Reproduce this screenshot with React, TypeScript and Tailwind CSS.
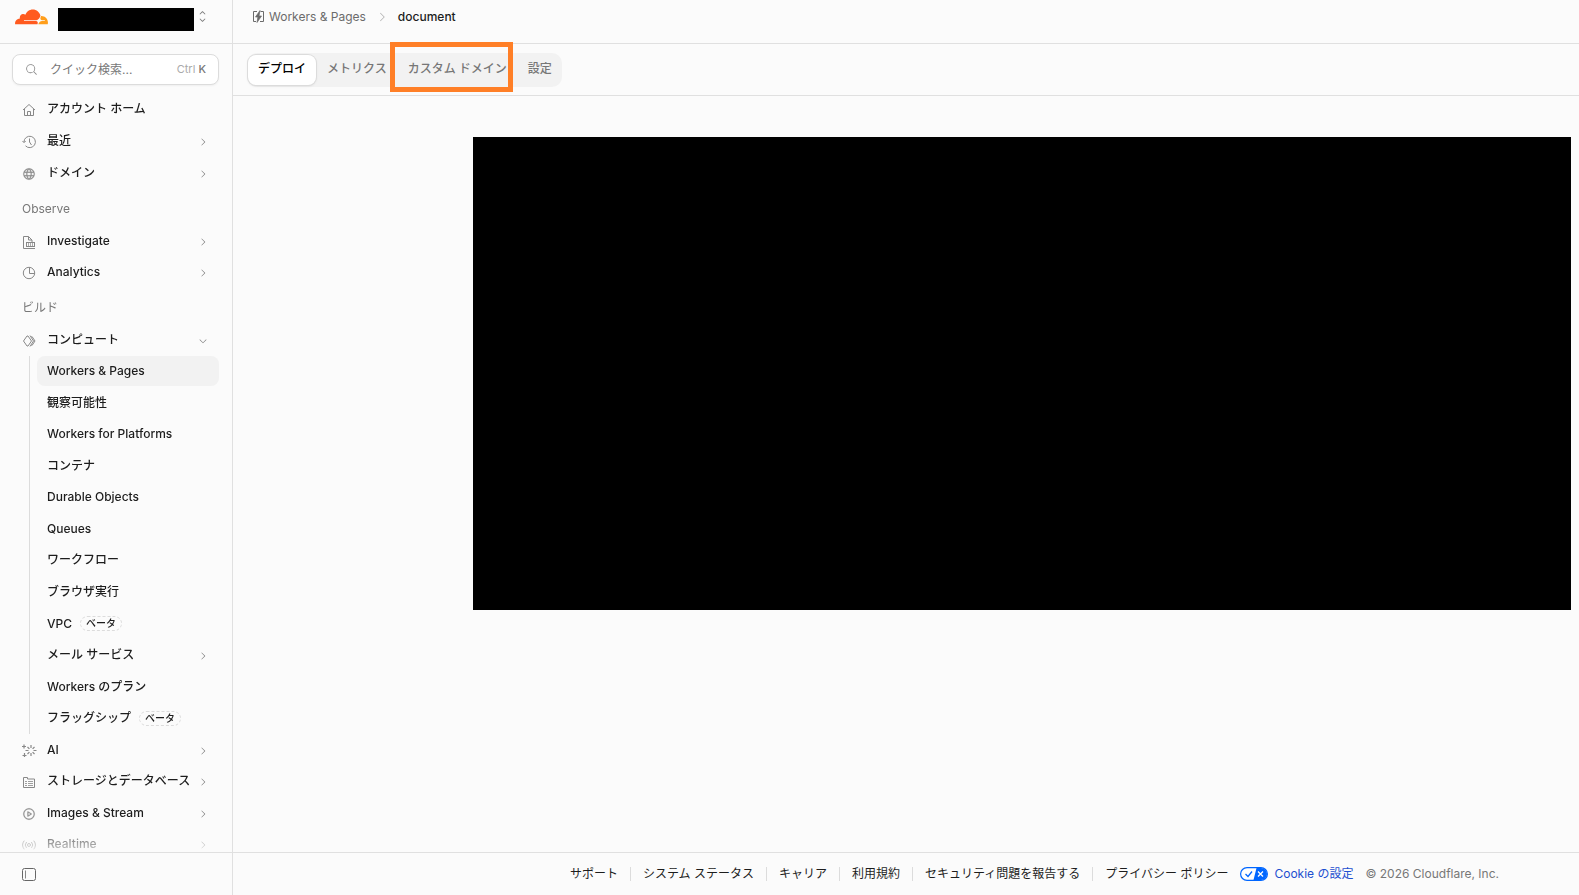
import type { ReactNode } from "react";
import {
    PiGlobe,
    PiMagnifyingGlass,
    PiPlayCircle,
    PiCaretRight,
    PiCaretDown,
    PiCaretUpDown,
} from "react-icons/pi";

const computeItems = [
    { label: "Workers & Pages", active: true },
    { label: "観察可能性" },
    { label: "Workers for Platforms" },
    { label: "コンテナ" },
    { label: "Durable Objects" },
    { label: "Queues" },
    { label: "ワークフロー" },
    { label: "ブラウザ実行" },
    { label: "VPC", beta: true },
    { label: "メール サービス", expandable: true },
    { label: "Workers のプラン" },
    { label: "フラッグシップ", beta: true },
];

const footerLinks = [
    "サポート",
    "システム ステータス",
    "キャリア",
    "利用規約",
    "セキュリティ問題を報告する",
    "プライバシー ポリシー",
];

export default function App() {
    return (
        <div className="flex h-screen min-h-[895px] overflow-hidden bg-[#fbfbfb] font-['Inter','Noto_Sans_CJK_JP',sans-serif] text-xs text-[#1d1d1d]">
            <Sidebar />
            <div className="flex min-w-0 flex-1 flex-col">
                <header className="flex h-11 shrink-0 items-center border-b border-[#e0e0e0] pb-2.5 pl-[19px]">
                    <nav className="flex items-center" aria-label="Breadcrumb">
                        <a href="#" className="flex items-center gap-1 text-[#6b6b6b]">
                            <WorkersIcon />
                            Workers &amp; Pages
                        </a>
                        <PiCaretRight className="mx-2.5 text-[#b0b0b0]" size={12} />
                        <span className="font-medium">document</span>
                    </nav>
                </header>

                <div className="flex h-[52px] shrink-0 items-center border-b border-[#e0e0e0] pl-3.5">
                    <div className="flex h-[34px] items-center gap-px rounded-[10px] bg-[#f2f2f2] font-medium text-[#777]">
                        <button className="ml-px h-[30px] rounded-lg bg-white px-2.5 pb-0.5 text-black shadow-sm ring-1 ring-[#dcdcdc]">デプロイ</button>
                        <button className="h-[30px] px-2.5 pb-0.5">メトリクス</button>
                        <div className="relative">
                            <button className="h-[30px] px-2.5 pb-0.5">カスタム ドメイン</button>
                            <div className="pointer-events-none absolute -top-[13px] right-1 -bottom-[7px] -left-2 border-[5px] border-[#ff7f27]" />
                        </div>
                        <button className="h-[30px] px-2.5 pb-0.5">設定</button>
                    </div>
                </div>

                <main className="flex-1 pt-[41px] pr-2 pl-60">
                    <div className="h-[473px] bg-black" />
                </main>

                <footer className="flex h-[43px] shrink-0 items-center justify-end border-t border-[#e0e0e0] pr-20 whitespace-nowrap">
                    {footerLinks.map((label, i) => (
                        <div key={label} className="flex items-center">
                            {i > 0 && <span className="mx-3 h-3.5 w-px bg-[#dcdcdc]" />}
                            <a href="#">{label}</a>
                        </div>
                    ))}
                    <a href="#" className="ml-3 flex items-center gap-1.5 text-[#1d4fd0]">
                        <PrivacyIcon />
                        Cookie の設定
                    </a>
                    <span className="ml-3 text-[#777]">© 2026 Cloudflare, Inc.</span>
                </footer>
            </div>
        </div>
    );
}

function Sidebar() {
    return (
        <aside className="flex w-[233px] shrink-0 flex-col border-r border-[#e0e0e0]">
            <div className="flex h-11 shrink-0 items-start border-b border-[#e0e0e0] pt-2 pl-[15px]">
                <CloudflareLogo />
                <div className="ml-2.5 h-[23px] w-[136px] bg-black" />
                <button className="mt-0.5 ml-0.5" aria-label="Switch account">
                    <PiCaretUpDown size={13} className="text-[#777]" />
                </button>
            </div>

            <div className="flex min-h-0 flex-1 flex-col overflow-hidden pr-[13px] pl-3">
                <label className="mt-2.5 mb-2 flex h-[31px] shrink-0 items-center rounded-lg border border-[#dcdcdc] bg-white px-3 shadow-xs">
                    <PiMagnifyingGlass size={13} className="shrink-0 text-[#888]" />
                    <input
                        type="text"
                        aria-label="クイック検索"
                        placeholder="クイック検索..."
                        className="ml-3 w-full min-w-0 bg-transparent outline-none placeholder:text-[#777]"
                    />
                    <span className="shrink-0 text-[11px] text-[#aaa]">
                        Ctrl <span className="font-medium text-[#777]">K</span>
                    </span>
                </label>

                <nav className="-mb-2 flex flex-1 flex-col [mask-image:linear-gradient(to_bottom,black_calc(100%-40px),transparent)]">
                    <div className="flex h-24 shrink-0 flex-col">
                        <NavItem icon={<HomeIcon />} label="アカウント ホーム" />
                        <NavItem icon={<RecentIcon />} label="最近" expandable />
                        <NavItem icon={<PiGlobe size={14} stroke="currentColor" strokeWidth={4} />} label="ドメイン" expandable />
                    </div>

                    <h2 className="flex h-9 shrink-0 items-center pt-1 pl-2.5 text-[#777]">Observe</h2>
                    <div className="flex h-[63px] shrink-0 flex-col">
                        <NavItem icon={<InvestigateIcon />} label="Investigate" expandable />
                        <NavItem icon={<AnalyticsIcon />} label="Analytics" expandable />
                    </div>

                    <h2 className="flex h-9 shrink-0 items-center pt-1 pl-2.5 text-[#777]">ビルド</h2>
                    <div className="flex flex-1 flex-col">
                        <NavItem icon={<ComputeIcon />} label="コンピュート" expandable open />
                        <div className="ml-[17px] flex flex-[12] flex-col border-l border-[#dcdcdc] pl-[7px]">
                            {computeItems.map((item) => (
                                <SubItem key={item.label} {...item} />
                            ))}
                        </div>
                        <NavItem icon={<AiIcon />} label="AI" expandable />
                        <NavItem icon={<StorageIcon />} label="ストレージとデータベース" expandable />
                        <NavItem icon={<PiPlayCircle size={14} stroke="currentColor" strokeWidth={4} />} label="Images & Stream" expandable />
                        <NavItem icon={<RealtimeIcon />} label="Realtime" expandable />
                    </div>
                </nav>
            </div>

            <div className="flex h-[43px] shrink-0 items-center border-t border-[#e0e0e0] pl-[22px]">
                <button aria-label="Collapse sidebar">
                    <svg width="14" height="13" viewBox="0 0 14 13" fill="none" stroke="#666">
                        <rect x="0.5" y="0.5" width="13" height="12" rx="2" />
                        <path d="M3.5 2.5v8" stroke="#888" />
                    </svg>
                </button>
            </div>
        </aside>
    );
}

function NavItem({ icon, label, expandable, open }: { icon: ReactNode, label: string, expandable?: boolean, open?: boolean }) {
    return (
        <a href="#" className="flex min-h-[30px] flex-1 items-center pr-[11px] pl-2.5 font-medium whitespace-nowrap">
            <span className="mt-0.5 w-[25px] shrink-0 text-[#888]">{icon}</span>
            <span className="flex-1">{label}</span>
            {expandable && (open
                ? <PiCaretDown size={10} className="mt-0.5 shrink-0 text-[#777]" />
                : <PiCaretRight size={10} className="mt-0.5 shrink-0 text-[#777]" />)}
        </a>
    );
}

function SubItem({ label, active, beta, expandable }: { label: string, active?: boolean, beta?: boolean, expandable?: boolean }) {
    return (
        <div className="flex min-h-[30px] flex-1 items-center">
            <a href="#" className={`flex h-[30px] w-full items-center rounded-lg pr-[11px] pl-2.5 font-medium whitespace-nowrap ${active ? "bg-[#f2f2f2]" : ""}`}>
                {label}
                {beta && (
                    <span className="ml-2 rounded-full border border-dashed border-[#dcdcdc] px-[5px] text-[10px] leading-[13px]">ベータ</span>
                )}
                {expandable && <PiCaretRight size={10} className="mt-0.5 ml-auto text-[#777]" />}
            </a>
        </div>
    );
}

function CloudflareLogo() {
    return (
        <svg width="33" height="17" viewBox="0 5.5 24 12.4" className="shrink-0">
            <path fill="#ff5a1f" d="M16.5088 16.8447c.1475-.5068.0908-.9707-.1553-1.3154-.2246-.3164-.6045-.499-1.0615-.5205l-8.6592-.1123a.1559.1559 0 0 1-.1333-.0713c-.0283-.042-.0351-.0986-.021-.1553.0278-.084.1123-.1484.2036-.1562l8.7359-.1123c1.0351-.0489 2.1601-.8868 2.5537-1.9136l.499-1.3013c.0215-.0561.0293-.1128.0147-.168-.5625-2.5463-2.835-4.4453-5.5499-4.4453-2.5039 0-4.6284 1.6177-5.3876 3.8614-.4927-.3658-1.1187-.5625-1.794-.499-1.2026.119-2.1665 1.083-2.2861 2.2856-.0283.31-.0069.6128.0635.894C1.5683 13.171 0 14.7754 0 16.752c0 .1748.0142.3515.0352.5273.0141.083.0844.1475.1689.1475h15.9814c.0909 0 .1758-.0645.2032-.1553z" />
            <path fill="#ff9e1b" d="M19.2656 11.2813c-.0771 0-.1611 0-.2383.0112-.0566 0-.1054.0415-.127.0976l-.3378 1.1744c-.1475.5068-.0918.9707.1543 1.3164.2256.3164.6055.498 1.0625.5195l1.8437.1133c.0557 0 .1055.0263.1329.0703.0283.043.0351.1074.0214.1562-.0283.084-.1132.1485-.204.1553l-1.921.1123c-1.041.0488-2.1582.8867-2.5527 1.914l-.1406.3585c-.0283.0713.0215.1416.0986.1416h6.5977c.0771 0 .1474-.0489.169-.126.1122-.4082.1757-.837.1757-1.2803 0-2.6025-2.125-4.727-4.7344-4.727" />
        </svg>
    );
}

function WorkersIcon() {
    return (
        <svg width="13" height="13" viewBox="0 0 13 13" fill="none" stroke="currentColor">
            <path d="M5 1.5H1.5v10H4M8.5 1.5h3v10H8" />
            <path d="M8 0.5L3.5 7h2.4L5 12.5 9.5 6H7z" fill="currentColor" strokeWidth="0.7" />
        </svg>
    );
}

function HomeIcon() {
    return (
        <svg width="14" height="14" viewBox="0 0 14 14" fill="none" stroke="currentColor" strokeLinejoin="round">
            <path d="M1 7l6-5.5L13 7M2.5 6v6.500h9V6" />
            <path d="M5.5 12.500v-4h3v4" />
        </svg>
    );
}

function RecentIcon() {
    return (
        <svg width="14" height="14" viewBox="0 0 14 14" fill="none" stroke="currentColor">
            <path d="M2 7a5.700 5.700 0 1 1 1.500 3.800M0.500 6L2 7.700 3.700 6" />
            <path d="M7.500 3.500V7l2 3" />
        </svg>
    );
}

function InvestigateIcon() {
    return (
        <svg width="14" height="14" viewBox="0 0 14 14" fill="none" stroke="currentColor">
            <path d="M13 13.500H1.500v-12h5L10 5v2M6.500 1.500V5H10" />
            <rect x="4.500" y="7.500" width="8" height="4" />
            <path d="M6.500 8v3M8.500 8v3M10.500 8v3" strokeWidth="0.7" />
        </svg>
    );
}

function AnalyticsIcon() {
    return (
        <svg width="14" height="14" viewBox="0 0 14 14" fill="none" stroke="currentColor">
            <circle cx="7" cy="7" r="5.700" />
            <path d="M7.500 1.500v6h5" />
        </svg>
    );
}

function ComputeIcon() {
    return (
        <svg width="14" height="14" viewBox="0 0 14 14" fill="none" stroke="currentColor" strokeLinejoin="round">
            <path d="M6 2H5L1.500 7 5 12h1M6 2l3.500 5L6 12" />
            <path d="M8 1.500L11.500 7 8 12.500M9.500 2.500h.5L13 7l-3 4.500h-.5" />
        </svg>
    );
}

function AiIcon() {
    return (
        <svg width="15" height="14" viewBox="0 0 15 14" fill="none" stroke="currentColor">
            <path d="M9 1v3M9 9v3M3.500 6.500h3M11.500 6.500h3M5.500 3l1.900 1.900M10.600 8.100l1.900 1.900M12.500 3l-1.900 1.900M7.400 8.100L5.500 10" strokeWidth="1.200" />
            <path d="M2 0.500v4M0 2.500h4M2.500 9v4M0.500 11.500h4" strokeWidth="1.200" />
        </svg>
    );
}

function StorageIcon() {
    return (
        <svg width="14" height="14" viewBox="0 0 14 14" fill="none" stroke="currentColor">
            <path d="M1.500 2.500h4V4h7v8.500h-11z" />
            <path d="M3 6.500h2M3 8.500h2M3 10.500h2M6 6.500h5M6 8.500h5M6 10.500h5" strokeWidth="0.8" />
        </svg>
    );
}

function RealtimeIcon() {
    return (
        <svg width="14" height="14" viewBox="0 0 14 14" fill="none" stroke="currentColor" strokeLinecap="round">
            <circle cx="7" cy="7" r="1.500" />
            <path d="M4.300 4.300a4 4 0 0 0 0 5.400M9.700 4.300a4 4 0 0 1 0 5.400M2 3a6.500 6.500 0 0 0 0 8M12 3a6.500 6.500 0 0 1 0 8" />
        </svg>
    );
}

function PrivacyIcon() {
    return (
        <svg width="28" height="14" viewBox="0 0 28 14" fill="none">
            <rect x="0.600" y="0.600" width="26.800" height="12.800" rx="6.400" fill="#fff" stroke="#0066ff" strokeWidth="1.200" />
            <path d="M16.500 1H21a6 6 0 0 1 0 12h-7.500z" fill="#0066ff" />
            <path d="M5.500 7l2.500 2.500L12 4.500" stroke="#0066ff" strokeWidth="1.300" />
            <path d="M18 4.500l5 5M23 4.500l-5 5" stroke="#fff" strokeWidth="1.300" />
        </svg>
    );
}
